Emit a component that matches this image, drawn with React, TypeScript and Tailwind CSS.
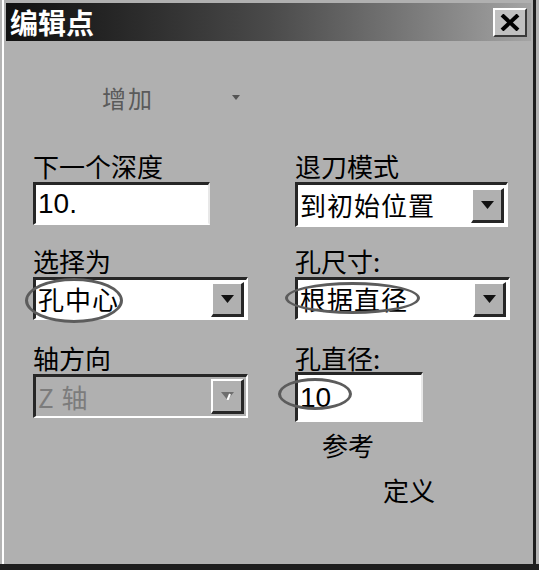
const cjk = "font-['Noto_Sans_CJK_SC',sans-serif]";

function DropButton({ disabled }: { disabled?: boolean }) {
  return (
    <div className="w-[33px] h-[35px] shrink-0 mr-[2px] flex items-center justify-center bg-[#b0b0b0] border-t-2 border-l-2 border-t-white border-l-white border-b-[3px] border-r-[3px] border-b-[#262626] border-r-[#262626]">
      <svg width="13" height="8" viewBox="0 0 13 8">
        <polygon points="0,0 13,0 6.5,8" fill={disabled ? "#6e6e6e" : "#111"} />
        {disabled && <line x1="9" y1="2" x2="6.5" y2="8" stroke="#fff" strokeWidth="2" />}
      </svg>
    </div>
  );
}

function Select({
  value,
  width,
  height,
  disabled,
  oval,
}: {
  value: string;
  width: string;
  height: string;
  disabled?: boolean;
  oval?: string;
}) {
  return (
    <div
      className={`relative flex items-center ${width} ${height} ${
        disabled ? "bg-[#b0b0b0] text-[#7c7c7c]" : "bg-white text-black"
      } border-t-[3px] border-l-[3px] border-t-[#262626] border-l-[#262626] border-b-2 border-r-2 border-b-white border-r-white`}
    >
      <span className="flex-1 pl-[2px] text-[26px] leading-[30px] tracking-[1px] whitespace-pre">{value}</span>
      <DropButton disabled={disabled} />
      {oval && <div className={`pointer-events-none absolute rounded-[50%] border-[3px] border-[#5c5c5c] ${oval}`} />}
    </div>
  );
}

function TextBox({
  value,
  width,
  height,
  oval,
}: {
  value: string;
  width: string;
  height: string;
  oval?: string;
}) {
  return (
    <div
      className={`relative flex items-center bg-white ${width} ${height} border-t-[3px] border-l-[3px] border-t-[#262626] border-l-[#262626] border-b-2 border-r-2 border-b-white border-r-[#e8e8e8]`}
    >
      <span className="pl-[2px] font-['Liberation_Sans',sans-serif] text-[28px] leading-[30px] text-black">{value}</span>
      {oval && <div className={`pointer-events-none absolute rounded-[50%] border-[3px] border-[#5c5c5c] ${oval}`} />}
    </div>
  );
}

function Label({ children, className = "h-[28px]" }: { children: string; className?: string }) {
  return <div className={`${className} text-[26px] leading-[24px] text-black whitespace-nowrap`}>{children}</div>;
}

export default function App() {
  return (
    <div className={`w-[539px] h-[570px] overflow-hidden bg-[#b4b4b4] pl-[2px] pr-[3px] border-b-[6px] border-b-[#1e1e1e] ${cjk}`}>
      <div className="h-[564px] bg-[#b0b0b0] border-l-2 border-l-white border-r-[3px] border-r-[#1e1e1e] px-[2px] pt-[3px]">
        {/* title bar */}
        <div className="h-[38px] flex items-center justify-between bg-gradient-to-r from-[#101010] via-[#4a4a4a] to-[#a4a4a4] pl-[4px] pr-[4px]">
          <span className="text-[28px] leading-[30px] font-bold text-white tracking-[0px]">编辑点</span>
          <div className="w-[34px] h-[29px] flex items-center justify-center bg-[#c0c0c0] border-t-2 border-l-2 border-t-white border-l-white border-b-2 border-r-2 border-b-[#3a3a3a] border-r-[#3a3a3a]">
            <svg width="20" height="17" viewBox="0 0 20 17">
              <line x1="2" y1="1" x2="18" y2="16" stroke="#000" strokeWidth="4" />
              <line x1="18" y1="1" x2="2" y2="16" stroke="#000" strokeWidth="4" />
            </svg>
          </div>
        </div>

        <div className="pl-[27px]">
          {/* 增加 */}
          <div className="mt-[45px] flex items-center h-[24px] pl-[69px]">
            <span className="text-[24px] leading-[24px] text-[#5a5a5a] tracking-[2px]">增加</span>
            <svg className="ml-[78px]" width="8" height="6" viewBox="0 0 8 6">
              <polygon points="0,0 8,0 4,5" fill="#555" />
            </svg>
          </div>

          {/* row 1 */}
          <div className="mt-[44px] flex items-start">
            <div className="w-[262px]">
              <Label>下一个深度</Label>
              <TextBox value="10." width="w-[177px]" height="h-[43px]" />
            </div>
            <div>
              <Label>退刀模式</Label>
              <Select value="到初始位置" width="w-[213px]" height="h-[45px]" />
            </div>
          </div>

          {/* row 2 */}
          <div className="mt-[22px] flex items-start">
            <div className="w-[262px]">
              <Label>选择为</Label>
              <Select value="孔中心" width="w-[215px]" height="h-[43px]" oval="-left-[11px] top-[-2px] w-[98px] h-[45px]" />
            </div>
            <div>
              <Label>孔尺寸:</Label>
              <Select value="根据直径" width="w-[215px]" height="h-[43px]" oval="-left-[13px] top-[2px] w-[135px] h-[32px]" />
            </div>
          </div>

          {/* row 3 */}
          <div className="mt-[26px] flex items-start">
            <div className="w-[262px]">
              <Label>轴方向</Label>
              <Select value="Z 轴" width="w-[215px]" height="h-[44px]" disabled />
            </div>
            <div>
              <Label className="h-[26px]">孔直径:</Label>
              <TextBox value="10" width="w-[128px]" height="h-[50px]" oval="-left-[20px] top-[3px] w-[74px] h-[32px]" />
              <div className="mt-[10px] pl-[27px] text-[26px] leading-[26px] text-black">参考</div>
              <div className="mt-[19px] pl-[88px] text-[26px] leading-[26px] text-black">定义</div>
            </div>
          </div>
        </div>
      </div>
    </div>
  );
}
